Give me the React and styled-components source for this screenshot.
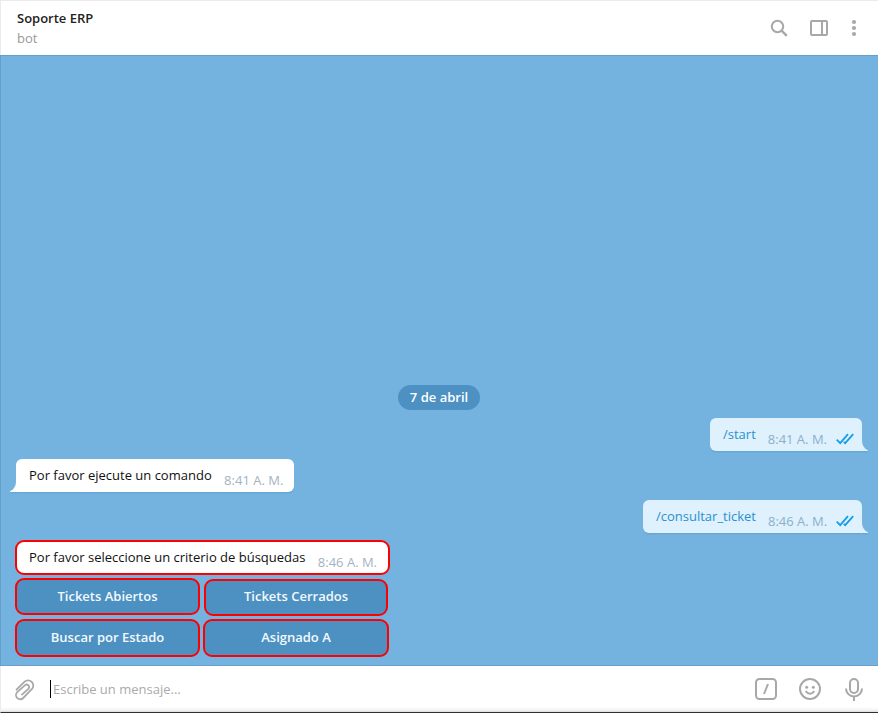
import React from 'react';
import styled, { createGlobalStyle } from 'styled-components';

const GlobalStyle = createGlobalStyle`
  * { box-sizing: border-box; }
  body {
    margin: 0;
    font-family: "Open Sans", "Noto Sans", sans-serif;
    font-size: 13px;
    line-height: 18px;
    overflow: hidden;
  }
`;

const Window = styled.main`
  width: 878px;
  height: 713px;
  display: flex;
  flex-direction: column;
  background: #fff;
`;

const Header = styled.header`
  height: 55px;
  flex: none;
  display: flex;
  justify-content: space-between;
  border-top: 1px solid #ebebeb;
  border-left: 1px solid #ebebeb;
  padding: 7px 12px 0 16px;
`;

const Title = styled.h1`
  margin: 0;
  font-size: 13px;
  line-height: 20px;
  font-weight: 600;
  color: #222;
`;

const Status = styled.div`
  line-height: 20px;
  color: #999;
`;

const HeaderActions = styled.div`
  display: flex;
  align-items: center;
  height: 40px;
`;

const Icon = styled.svg`
  display: block;
  flex: none;
  width: 24px;
  height: 24px;
  margin-left: ${(p) => p.$gap || 0}px;
  fill: none;
  stroke: #a8a8a8;
  stroke-width: 2;
`;

const Chat = styled.section`
  height: 611px;
  flex: none;
  display: flex;
  flex-direction: column;
  justify-content: flex-end;
  background: #74b3e0;
  border: 1px solid #679fcc;
  border-right: 0;
  padding: 0 16px 8px 15px;
`;

const DateBadge = styled.div`
  align-self: center;
  width: 82px;
  height: 25px;
  border-radius: 13px;
  margin: 0 1px 8px 0;
  padding-left: 1px;
  background: #4c91c2;
  color: #fff;
  font-weight: 600;
  line-height: 24px;
  text-align: center;
`;

const Bubble = styled.article`
  position: relative;
  display: flex;
  align-self: ${(p) => (p.$out ? 'flex-end' : 'flex-start')};
  width: ${(p) => p.$width}px;
  height: 33px;
  margin-bottom: 8px;
  padding: 7px 7px 0 13px;
  border-radius: ${(p) => (p.$out ? '6px 6px 0 6px' : '6px 6px 6px 0')};
  background: ${(p) => (p.$out ? '#def1fd' : '#fff')};
  color: ${(p) => (p.$out ? '#2a90d0' : '#111')};
  box-shadow: 0 2px 0 -0.5px #69a7d5;
  white-space: nowrap;
`;

const Time = styled.time`
  margin: 5px 0 0 ${(p) => (p.$out ? 12 : 12.4)}px;
  color: ${(p) => (p.$out ? '#8bb0cb' : '#a3b3c2')};
`;

const Tail = styled.svg`
  position: absolute;
  bottom: -2px;
  ${(p) => (p.$out ? 'right: -6px;' : 'left: -6px; transform: scaleX(-1);')}
  width: 6px;
  height: 13px;
`;

const Checks = styled.svg`
  width: 18px;
  height: 12px;
  margin: 8px 0 0 9px;
  fill: none;
  stroke: #169de8;
  stroke-width: 1.8;
`;

const Prompt = styled.article`
  display: flex;
  width: 375px;
  height: 35px;
  margin: -1px 0 3px -1px;
  padding: 6px 0 0 12px;
  border: 2px solid #ff0000;
  border-radius: 9px;
  background: #fff;
  color: #111;
  white-space: nowrap;
`;

const Keyboard = styled.div`
  display: flex;
  flex-direction: column;
  gap: 3px;
  margin-left: -1px;
`;

const KeyRow = styled.div`
  display: flex;
  gap: ${(p) => p.$gap}px;
`;

const Key = styled.button`
  width: ${(p) => p.$width}px;
  height: ${(p) => p.$height}px;
  margin: ${(p) => p.$top || 0}px 0 0;
  padding: 0 0 ${(p) => p.$lift || 0}px;
  border: 2px solid #ff0000;
  border-radius: 9px;
  background: #4c91c2;
  color: #f4f9fc;
  font: 600 13px/18px "Open Sans", "Noto Sans", sans-serif;
`;

const Composer = styled.footer`
  height: 47px;
  flex: none;
  display: flex;
  align-items: center;
  padding: 0 12px 1px 11px;
  border-left: 1px solid #ebebeb;
  border-bottom: 1px solid #303030;
  background: linear-gradient(#fff 0 41px, #f4f4f4 44px, #dcdcdc 46px);
`;

const Field = styled.div`
  flex: 1;
  height: 18px;
  margin-left: 14px;
  padding-left: 2px;
  border-left: 1px solid #000;
  color: #aaa;
`;

function Meta({ time, out }) {
  return (
    <>
      <Time $out={out}>{time}</Time>
      {out && (
        <Checks viewBox="0 0 18 12">
          <path d="M.7 6.7 4.2 10.2 12 1.2M7.8 8.8 9.2 10.2 17.2 1.2" />
        </Checks>
      )}
    </>
  );
}

function Message({ text, time, out, width }) {
  return (
    <Bubble $out={out} $width={width}>
      <span>{text}</span>
      <Meta time={time} out={out} />
      <Tail $out={out} viewBox="0 0 6 13">
        <path d="M0 10H6V12.5H0z" fill="#69a7d5" />
        <path d="M0 0C0 5 2 8.5 6 10.3V11H0z" fill={out ? '#def1fd' : '#fff'} />
      </Tail>
    </Bubble>
  );
}

export default function App() {
  return (
    <>
      <GlobalStyle />
      <Window>
        <Header>
          <div>
            <Title>Soporte ERP</Title>
            <Status>bot</Status>
          </div>
          <HeaderActions>
            <Icon viewBox="0 0 24 24">
              <circle cx="10.5" cy="10.5" r="5.7" />
              <path d="M14.6 14.6 19.8 19.8" strokeWidth="2.4" />
            </Icon>
            <Icon viewBox="0 0 24 24" $gap={16}>
              <rect x="4" y="5" width="16" height="14" rx="1" />
              <path d="M15 5V19" />
            </Icon>
            <Icon viewBox="0 0 24 24" $gap={11}>
              <g fill="#a8a8a8" stroke="none">
                <circle cx="12" cy="6" r="2.1" />
                <circle cx="12" cy="12" r="2.1" />
                <circle cx="12" cy="18" r="2.1" />
              </g>
            </Icon>
          </HeaderActions>
        </Header>
        <Chat>
          <DateBadge>7 de abril</DateBadge>
          <Message out text="/start" time="8:41 A. M." width={152} />
          <Message text="Por favor ejecute un comando" time="8:41 A. M." width={278} />
          <Message out text="/consultar_ticket" time="8:46 A. M." width={219} />
          <Prompt>
            <span>Por favor seleccione un criterio de búsquedas</span>
            <Meta time="8:46 A. M." />
          </Prompt>
          <Keyboard>
            <KeyRow $gap={4}>
              <Key $width={185} $height={37} $lift={1}>Tickets Abiertos</Key>
              <Key $width={184} $height={37} $top={1} $lift={3}>Tickets Cerrados</Key>
            </KeyRow>
            <KeyRow $gap={3}>
              <Key $width={185} $height={38} $lift={2}>Buscar por Estado</Key>
              <Key $width={186} $height={38} $lift={2}>Asignado A</Key>
            </KeyRow>
          </Keyboard>
        </Chat>
        <Composer>
          <Icon viewBox="0 0 24 24">
            <path
              strokeWidth="1.8"
              d="M4 13.2 12.4 4.9A5 5 0 0 1 19.8 12.2L11.2 21A4.1 4.1 0 0 1 5.2 15.2L13.1 8.1A2.5 2.5 0 0 1 16.6 11.6L9.4 18.1"
            />
          </Icon>
          <Field>Escribe un mensaje...</Field>
          <Icon viewBox="0 0 24 24">
            <rect x="2" y="2" width="20" height="20" rx="3.5" />
            <path d="M14 7 10 17" />
          </Icon>
          <Icon viewBox="0 0 24 24" $gap={20}>
            <circle cx="12" cy="12" r="10" />
            <path d="M7.6 14.2Q12 19.3 16.4 14.2" />
            <g fill="#a8a8a8" stroke="none">
              <circle cx="8.7" cy="10.3" r="1.5" />
              <circle cx="15.3" cy="10.3" r="1.5" />
            </g>
          </Icon>
          <Icon viewBox="0 0 24 24" $gap={20}>
            <rect x="8" y="2" width="8" height="14" rx="4" />
            <path d="M4 11.5A8 8 0 0 0 20 11.5M12 20V24" />
          </Icon>
        </Composer>
      </Window>
    </>
  );
}
